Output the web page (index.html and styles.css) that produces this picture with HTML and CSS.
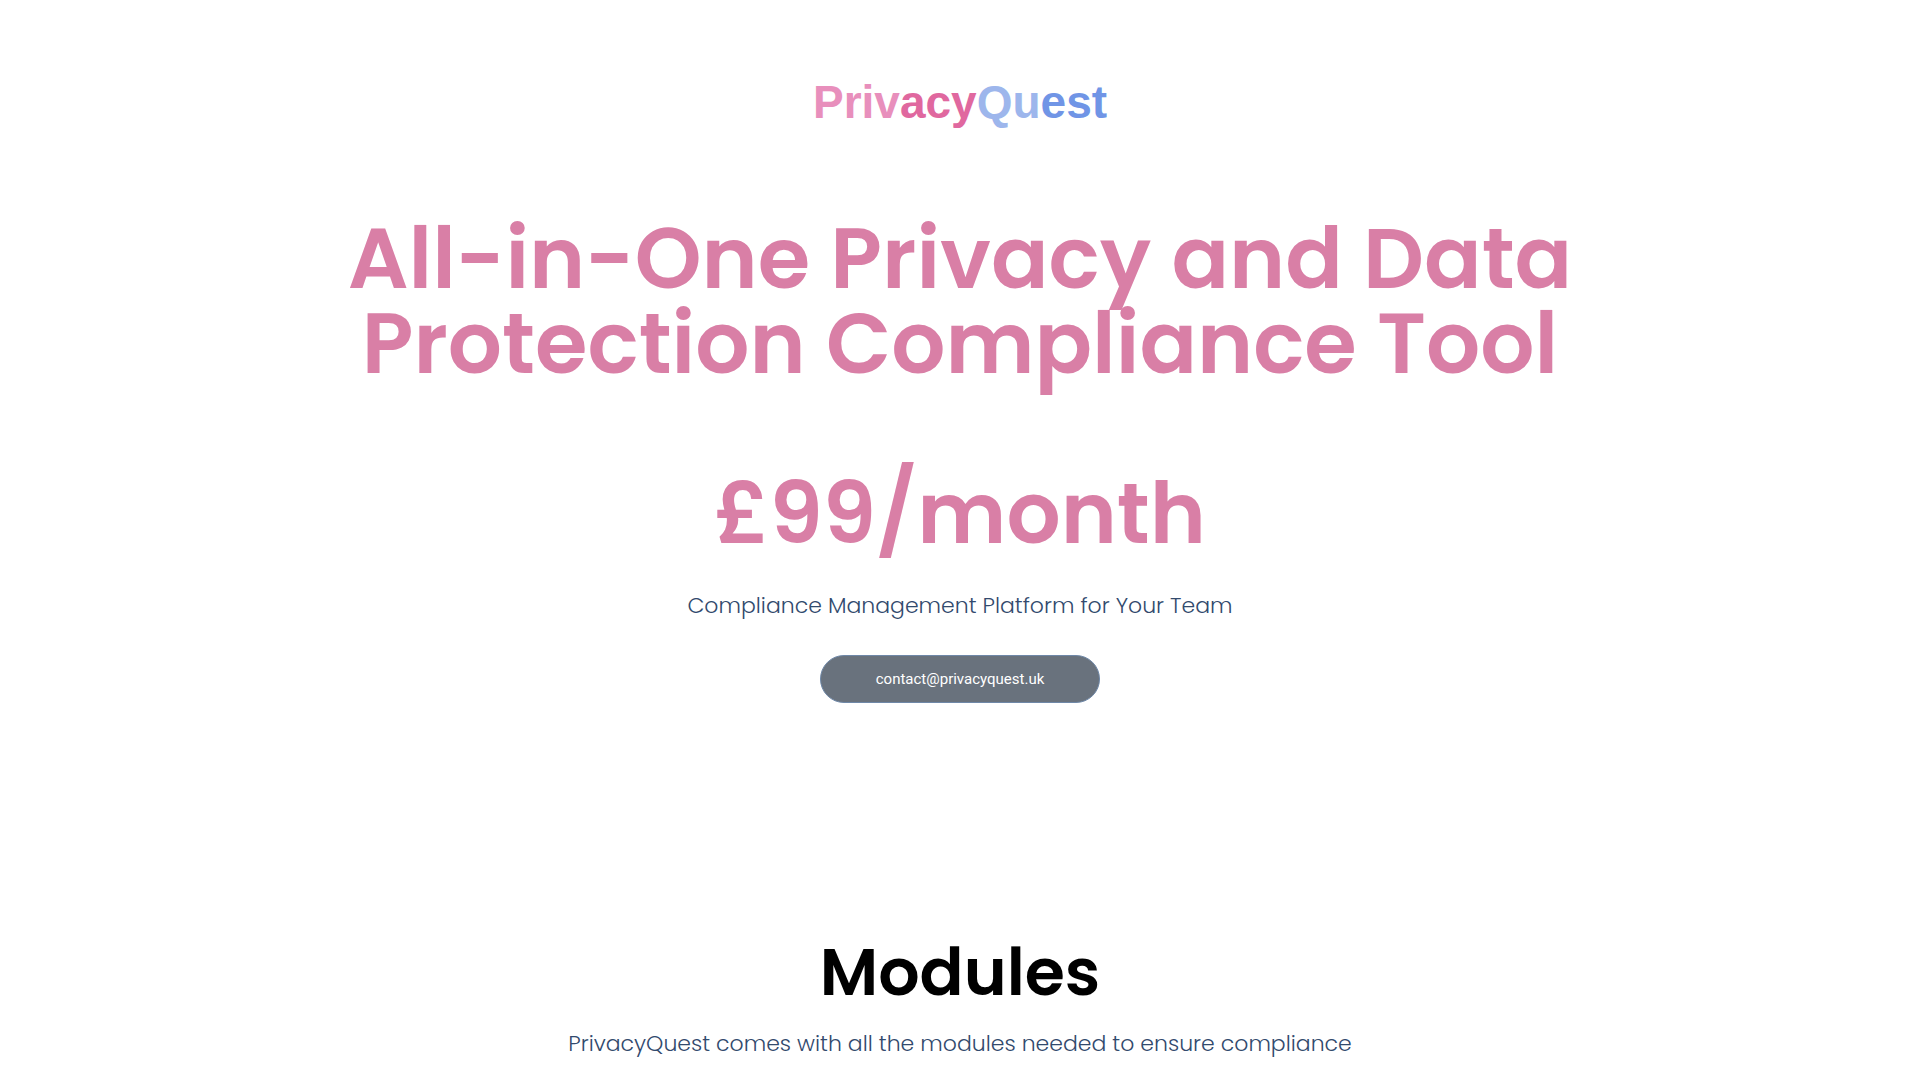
FILE: index.html
```html
<!DOCTYPE html>
<html lang="en">
<head>
<meta charset="utf-8">
<meta name="viewport" content="width=device-width, initial-scale=1">
<title>PrivacyQuest</title>
<link rel="stylesheet" href="styles.css">
</head>
<body>
<header class="hero">
  <div class="logo"><span class="logo-priv">Priv</span><span class="logo-acy">acy</span><span class="logo-qu">Qu</span><span class="logo-est">est</span></div>
  <h1 class="title">All-in-One Privacy and Data<br>Protection Compliance Tool</h1>
  <p class="price">£99/month</p>
  <p class="lead">Compliance Management Platform for Your Team</p>
  <a class="contact" href="mailto:contact@privacyquest.uk">contact@privacyquest.uk</a>
</header>
<main class="modules">
  <h2 class="modules-title">Modules</h2>
  <p class="lead">PrivacyQuest comes with all the modules needed to ensure compliance</p>
</main>
</body>
</html>
```
FILE: styles.css
```css
* { box-sizing: border-box; }
body {
  margin: 0;
  background: #fff;
  color: #324a6d;
  font-family: Poppins, Inter, sans-serif;
  text-align: center;
}
h1, h2, p { margin: 0; }
.hero {
  display: flex;
  flex-direction: column;
  align-items: center;
  padding: 76px 24px 0;
}
.logo {
  font: 700 46px/52px "Liberation Sans", Arial, sans-serif;
}
.logo-priv { color: #e88fbc; }
.logo-acy { color: #e0689f; }
.logo-qu { color: #9db6ec; }
.logo-est { color: #7095e6; }
.title, .price {
  color: #d97fa6;
  font-size: 85px;
  font-weight: 600;
  line-height: 85px;
}
.title { margin-top: 88px; }
.price { margin-top: 85px; }
.lead {
  font-size: 22px;
  font-weight: 300;
  line-height: 32px;
}
.price + .lead { margin-top: 34px; }
.contact {
  margin-top: 33px;
  padding: 0 55px;
  border: 1px solid #6f88a8;
  border-radius: 24px;
  background: #69727d;
  color: #fff;
  font: 400 15px/46px Roboto, sans-serif;
  text-decoration: none;
}
.modules { padding: 237px 24px 20px; }
.modules-title {
  color: #000;
  font-size: 65px;
  font-weight: 600;
  line-height: 65px;
}
.modules-title + .lead { margin-top: 23px; }
```
